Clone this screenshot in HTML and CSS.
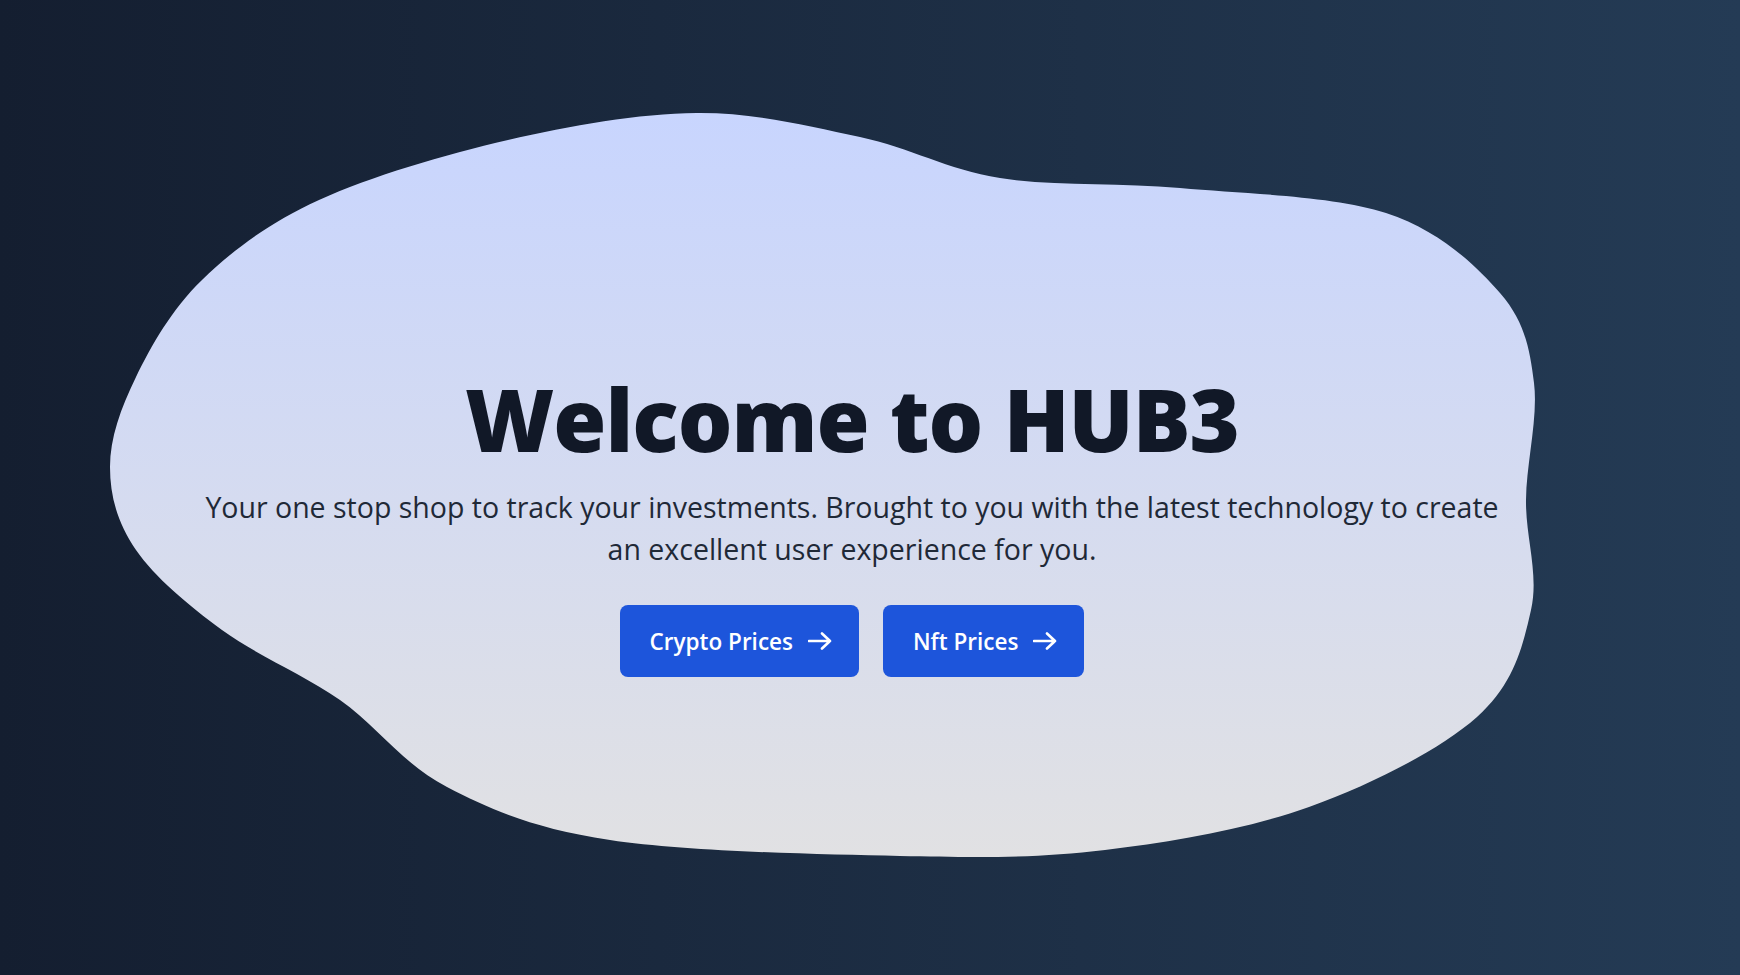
FILE: index.html
```html
<!DOCTYPE html>
<html lang="en">
<head>
<meta charset="utf-8">
<title>HUB3</title>
<link rel="stylesheet" href="styles.css">
</head>
<body>
<main class="hero">
  <svg class="blob" viewBox="0 0 1740 975" preserveAspectRatio="none" aria-hidden="true">
    <defs>
      <linearGradient id="blobFill" x1="0" y1="113" x2="0" y2="857" gradientUnits="userSpaceOnUse">
        <stop offset="0" stop-color="#c8d5fe"/>
        <stop offset="1" stop-color="#e1e1e3"/>
      </linearGradient>
    </defs>
    <path fill="url(#blobFill)" d="M697 113
      C755.7 112.5 809.5 126.2 860 137
      C910.5 147.8 946.7 169.5 1000 178
      C1053.3 186.5 1115.7 182.2 1180 188
      C1244.3 193.8 1332.7 195.5 1386 213
      C1439.3 230.5 1475.3 264.7 1500 293
      C1524.7 321.3 1529.7 348.5 1534 383
      C1538.3 417.5 1526.5 462.2 1526 500
      C1525.5 537.8 1539.2 573.8 1531 610
      C1522.8 646.2 1514 684.2 1477 717
      C1440 749.8 1371 784.8 1309 807
      C1247 829.2 1173.2 841.8 1105 850
      C1036.8 858.2 982.5 857.7 900 856
      C817.5 854.3 685.5 851.5 610 840
      C534.5 828.5 492 810.3 447 787
      C402 763.7 377.5 726.2 340 700
      C302.5 673.8 256 655 222 630
      C188 605 154.7 577.2 136 550
      C117.3 522.8 110 495.8 110 467
      C110 438.2 120.7 408.2 136 377
      C151.3 345.8 171.5 309.5 202 280
      C232.5 250.5 268 223.3 319 200
      C370 176.7 445 154.5 508 140
      C571 125.5 638.3 113.5 697 113 Z"/>
  </svg>
  <section class="content">
    <h1 class="title">Welcome to HUB3</h1>
    <p class="lead">Your one stop shop to track your investments. Brought to you with the latest technology to create an excellent user experience for you.</p>
    <div class="actions">
      <a class="btn" href="#crypto">Crypto Prices
        <svg class="arrow" viewBox="0 0 24 18" aria-hidden="true"><path d="M1 9h21M14 1.5 22 9l-8 7.5"/></svg>
      </a>
      <a class="btn" href="#nft">Nft Prices
        <svg class="arrow" viewBox="0 0 24 18" aria-hidden="true"><path d="M1 9h21M14 1.5 22 9l-8 7.5"/></svg>
      </a>
    </div>
  </section>
</main>
</body>
</html>
```

FILE: styles.css
```css
* { box-sizing: border-box; }

html, body {
  margin: 0;
  height: 100%;
}

body {
  background: linear-gradient(to right, #141e30, #243b55);
  font-family: "Open Sans", "Noto Sans", Arial, sans-serif;
  overflow: hidden;
}

.hero {
  position: relative;
  height: 100vh;
  width: 100%;
}

.blob {
  position: absolute;
  inset: 0;
  width: 100%;
  height: 100%;
}

.content {
  position: relative;
  display: flex;
  flex-direction: column;
  align-items: center;
  padding: 375px 36px 0 0;
  text-align: center;
}

.title {
  margin: 0 0 23px;
  font-size: 86px;
  line-height: 88px;
  font-weight: 800;
  letter-spacing: -1px;
  color: #111827;
}

.lead {
  margin: 0 0 35px;
  max-width: 1310px;
  font-size: 28.5px;
  line-height: 42px;
  font-weight: 400;
  color: #1f2937;
}

.actions {
  display: flex;
  gap: 24px;
}

.btn {
  display: flex;
  align-items: center;
  gap: 15px;
  height: 72px;
  padding: 0 27px 0 30px;
  border-radius: 8px;
  background: #1d55db;
  color: #ffffff;
  font-size: 22.5px;
  font-weight: 600;
  text-decoration: none;
}

.arrow {
  width: 24px;
  height: 18px;
  fill: none;
  stroke: #ffffff;
  stroke-width: 2.6;
  stroke-linecap: round;
  stroke-linejoin: round;
}
```
